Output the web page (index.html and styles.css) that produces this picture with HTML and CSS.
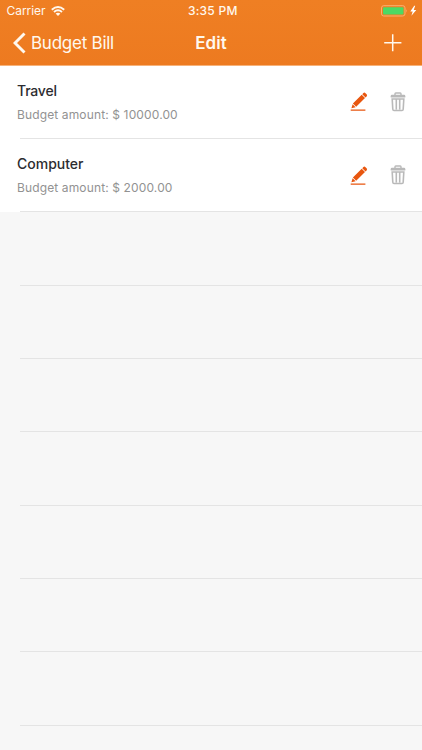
FILE: index.html
```html
<!DOCTYPE html>
<html lang="en">
<head>
<meta charset="utf-8">
<title>Edit</title>
<link rel="stylesheet" href="styles.css">
</head>
<body>
<svg class="sprite" aria-hidden="true">
  <symbol id="pencil" viewBox="0 0 18 20">
    <path d="M1.4 16.3 2.6 12.2 5.6 15.2ZM2.9 11.5 11.7 2.7 15 6 6.2 14.8ZM12.3 2.2 13.4 1.1Q14.4.1 15.5 1.2L16.6 2.3Q17.6 3.4 16.6 4.4L15.5 5.4ZM.7 17.6H15.4V18.8H.7Z"/>
  </symbol>
  <symbol id="trash" viewBox="0 0 16 20">
    <path d="M5 3V1.8Q5 1 5.8 1H10.2Q11 1 11 1.8V3" fill="none" stroke="currentColor" stroke-width="1.4"/>
    <path d="M.7 5.4V4.2Q.7 2.8 2 2.8H14Q15.3 2.8 15.3 4.2V5.4Z" fill="currentColor"/>
    <path d="M2.2 7H13.8L13.2 17.2Q13.1 18.5 12 18.5H4Q2.9 18.5 2.8 17.2ZM6.3 7.5V17.5M9.7 7.5V17.5" fill="none" stroke="currentColor" stroke-width="1.6"/>
  </symbol>
</svg>
<header class="header">
  <div class="status">
    <div class="carrier"><span class="carrier-name">Carrier</span>
      <svg class="wifi" viewBox="0 0 14 10"><path d="M.8 3.7Q7-1.7 13.2 3.7M3 6Q7 2.6 11 6" fill="none" stroke="currentColor" stroke-width="1.9"/><path d="M4.6 7.6Q7 5.7 9.4 7.6L7 10Z" fill="currentColor"/></svg>
    </div>
    <span class="time">3:35 PM</span>
    <div class="power">
      <svg class="battery" viewBox="0 0 36 12"><rect x=".5" y=".7" width="23.5" height="10.3" rx="2.2" fill="none" stroke="#fbb070"/><rect x="2" y="2.2" width="20.5" height="7.3" rx="1" fill="#4cd964"/><path d="M25.2 4.2Q26.7 5.8 25.2 7.5Z" fill="#fbb070"/><path d="M33.2.8 29.3 6.5H31.7L30.4 10.8 35.3 5H32.7L34.2.8Z" fill="#fff"/></svg>
    </div>
  </div>
  <nav class="nav">
    <div class="back"><svg class="chevron" viewBox="0 0 13 22"><path d="M11.5 1.5 2 11 11.5 20.5" fill="none" stroke="currentColor" stroke-width="2.9"/></svg><span class="back-label">Budget Bill</span></div>
    <span class="title">Edit</span>
    <div class="add"><svg class="plus" viewBox="0 0 18 18"><path d="M8.7.3V17.3M.2 8.8H17.4" stroke="currentColor" stroke-width="1.5"/></svg></div>
  </nav>
</header>
<main class="list">
  <section class="row filled">
    <div class="info"><div class="name travel">Travel</div><div class="amount">Budget amount: $ 10000.00</div></div>
    <svg class="pencil"><use href="#pencil"/></svg><svg class="trash"><use href="#trash"/></svg>
  </section>
  <section class="row filled">
    <div class="info"><div class="name">Computer</div><div class="amount">Budget amount: $ 2000.00</div></div>
    <svg class="pencil"><use href="#pencil"/></svg><svg class="trash"><use href="#trash"/></svg>
  </section>
  <div class="row"></div><div class="row"></div><div class="row"></div><div class="row"></div><div class="row"></div><div class="row"></div><div class="row"></div>
</main>
</body>
</html>
```
FILE: styles.css
```css
* { box-sizing: border-box; }
body { margin: 0; height: 750px; overflow: hidden; display: flex; flex-direction: column; background: #f7f7f7; font-family: Inter, "Liberation Sans", sans-serif; }
svg { display: block; flex: none; }
.sprite { display: none; }
.header { flex: none; height: 65.7px; color: #fff8ee; background: linear-gradient(#f6b27a, #f6b27a) 0 100% / 100% 1px no-repeat, linear-gradient(#ef7f23, #ed7a20); }
.status, .nav { display: grid; grid-template-columns: 1fr auto 1fr; align-items: center; white-space: nowrap; }
.status { height: 22px; padding: 0 5px 0 6.5px; font-size: 12px; line-height: 22px; }
.carrier { display: flex; align-items: center; gap: 6px; }
.carrier-name { letter-spacing: -.05px; }
.wifi { width: 14px; height: 10px; }
.time { font-weight: 500; letter-spacing: .25px; padding-left: 2px; }
.power { justify-self: end; }
.battery { width: 36px; height: 12px; }
.nav { height: 42px; padding: 0 20px 0 13px; }
.back { display: flex; align-items: center; gap: 5px; font-size: 17px; letter-spacing: -.25px; }
.chevron { width: 13px; height: 22px; }
.title { font-size: 17px; font-weight: 600; padding-left: 7px; }
.add { justify-self: end; }
.plus { width: 18px; height: 18px; }
.list { flex: 1; min-height: 0; overflow: hidden; }
.row { height: 73.333px; display: flex; padding: 0 16px 0 17px; background: linear-gradient(#e4e4e4, #e4e4e4) 20px 100% / 100% 1px no-repeat; }
.filled { background-color: #fff; }
.info { flex: 1; padding-top: 16px; white-space: nowrap; }
.name { font-size: 14px; line-height: 18px; font-weight: 500; color: #2c2c30; }
.travel { letter-spacing: -.2px; }
.amount { margin-top: 6px; font-size: 12px; line-height: 17px; letter-spacing: .13px; color: #929292; }
.pencil { width: 18px; height: 20px; margin: 26.5px 22.5px 0 0; color: #e8560f; fill: currentColor; }
.trash { width: 16px; height: 20px; margin-top: 26px; color: #b9b9b9; }
```
